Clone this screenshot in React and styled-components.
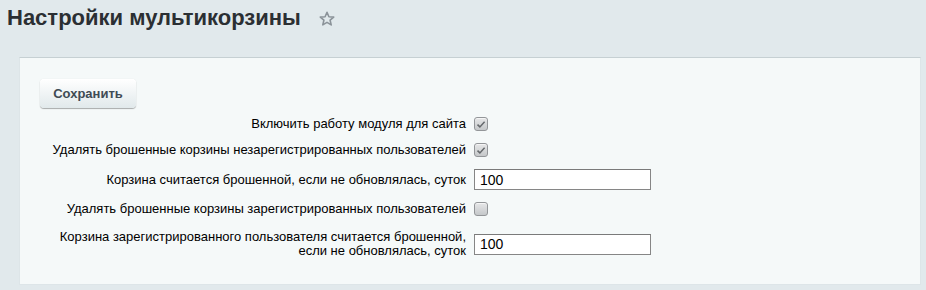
import React, { useState } from 'react';
import styled, { createGlobalStyle } from 'styled-components';

const GlobalStyle = createGlobalStyle`
  html, body {
    margin: 0;
    padding: 0;
    background: #e1e9ec;
    font-family: 'Liberation Sans', Arial, sans-serif;
  }
`;

const Page = styled.div`
  width: 926px;
  height: 290px;
  background: #e1e9ec;
  box-sizing: border-box;
  padding: 0 5px 0 19px;
  overflow: hidden;
`;

const Header = styled.div`
  display: flex;
  align-items: center;
  height: 36px;
  margin-left: -12px;
`;

const Title = styled.h1`
  margin: 0;
  font-size: 22px;
  font-weight: bold;
  color: #2b2f33;
`;

const StarButton = styled.span`
  display: inline-flex;
  margin-left: 18px;
  margin-top: 2px;
  color: #8b9399;
`;

const Panel = styled.div`
  margin-top: 21px;
  background: #f5f9f9;
  border: 1px solid #dde5e8;
  border-top-color: #c6d0d3;
  padding: 21px 20px 20px;
  box-sizing: border-box;
  height: 228px;
`;

const SaveButton = styled.button`
  height: 29px;
  width: 96px;
  border: none;
  border-radius: 4px;
  background: linear-gradient(to bottom, #ffffff, #e1e9eb);
  box-shadow: 0 0 1px rgba(0, 0, 0, 0.15), 0 1px 1px rgba(0, 0, 0, 0.3), inset 0 1px 0 #fff;
  font-family: 'Liberation Sans', Arial, sans-serif;
  font-size: 13px;
  font-weight: bold;
  color: #3f4b54;
  cursor: pointer;
  padding: 0;
`;

const Form = styled.div`
  display: grid;
  grid-template-columns: 454px 1fr;
  margin-top: 3px;
  margin-left: -20px;
`;

const Label = styled.div`
  display: flex;
  align-items: center;
  justify-content: flex-end;
  text-align: right;
  padding: 6px 8px 6px 0;
  font-size: 13px;
  line-height: 14px;
  color: #000;
  min-height: ${p => p.$h || 14}px;
`;

const Control = styled.div`
  display: flex;
  align-items: center;
  padding: 6px 0;
`;

const Box = styled.span`
  display: inline-flex;
  align-items: center;
  justify-content: center;
  width: 12px;
  height: 12px;
  border: 1px solid #939699;
  border-radius: 3px;
  background: linear-gradient(to bottom, #e6e7e8, #c5c8ca);
  box-shadow: inset 0 1px 0 rgba(255, 255, 255, 0.6);
  cursor: pointer;
`;

const TextInput = styled.input`
  width: 177px;
  height: 21px;
  box-sizing: border-box;
  border: 1px solid #868686;
  border-top-color: #7a7a7a;
  background: #fff;
  padding: 0 5px;
  font-family: 'Liberation Sans', Arial, sans-serif;
  font-size: 14px;
  color: #000;
  outline: none;
`;

function Star() {
  return (
    <svg width="16" height="16" viewBox="0 0 16 16">
      <path
        d="M8 1.3l1.9 4.4 4.8.4-3.6 3.1 1.1 4.7L8 11.4l-4.2 2.5 1.1-4.7-3.6-3.1 4.8-.4z"
        fill="none"
        stroke="currentColor"
        strokeWidth="1.6"
        strokeLinejoin="round"
      />
    </svg>
  );
}

function Checkbox({ checked, onChange }) {
  return (
    <Box onClick={onChange}>
      {checked && (
        <svg width="10" height="9" viewBox="0 0 10 9">
          <path d="M1.5 4.6l2.4 2.3L8.6 1.8" fill="none" stroke="#65696c" strokeWidth="1.5" />
        </svg>
      )}
    </Box>
  );
}

export default function App() {
  const [enabled, setEnabled] = useState(true);
  const [delGuest, setDelGuest] = useState(true);
  const [guestDays, setGuestDays] = useState('100');
  const [delUser, setDelUser] = useState(false);
  const [userDays, setUserDays] = useState('100');

  return (
    <>
      <GlobalStyle />
      <Page>
        <Header>
          <Title>Настройки мультикорзины</Title>
          <StarButton><Star /></StarButton>
        </Header>
        <Panel>
          <SaveButton>Сохранить</SaveButton>
          <Form>
            <Label>Включить работу модуля для сайта</Label>
            <Control>
              <Checkbox checked={enabled} onChange={() => setEnabled(!enabled)} />
            </Control>

            <Label>Удалять брошенные корзины незарегистрированных пользователей</Label>
            <Control>
              <Checkbox checked={delGuest} onChange={() => setDelGuest(!delGuest)} />
            </Control>

            <Label $h={21}>Корзина считается брошенной, если не обновлялась, суток</Label>
            <Control>
              <TextInput value={guestDays} onChange={e => setGuestDays(e.target.value)} />
            </Control>

            <Label>Удалять брошенные корзины зарегистрированных пользователей</Label>
            <Control>
              <Checkbox checked={delUser} onChange={() => setDelUser(!delUser)} />
            </Control>

            <Label $h={32}>
              Корзина зарегистрированного пользователя считается брошенной,
              <br />
              если не обновлялась, суток
            </Label>
            <Control>
              <TextInput value={userDays} onChange={e => setUserDays(e.target.value)} />
            </Control>
          </Form>
        </Panel>
      </Page>
    </>
  );
}
